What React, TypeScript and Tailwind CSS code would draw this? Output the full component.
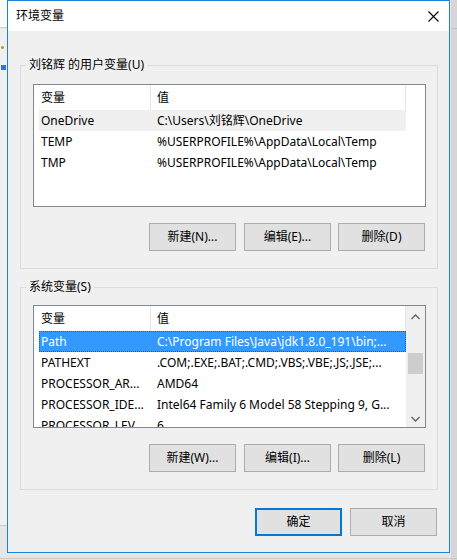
import React from 'react';

type Item = { name: string; value: string };

const USER_VARS: Item[] = [
  { name: 'OneDrive', value: 'C:\\Users\\刘铭辉\\OneDrive' },
  { name: 'TEMP', value: '%USERPROFILE%\\AppData\\Local\\Temp' },
  { name: 'TMP', value: '%USERPROFILE%\\AppData\\Local\\Temp' },
];

const SYS_VARS: Item[] = [
  { name: 'Path', value: 'C:\\Program Files\\Java\\jdk1.8.0_191\\bin;...' },
  { name: 'PATHEXT', value: '.COM;.EXE;.BAT;.CMD;.VBS;.VBE;.JS;.JSE;...' },
  { name: 'PROCESSOR_AR...', value: 'AMD64' },
  { name: 'PROCESSOR_IDE...', value: 'Intel64 Family 6 Model 58 Stepping 9, G...' },
  { name: 'PROCESSOR_LEV...', value: '6' },
];

const Button: React.FC<{ label: string; primary?: boolean }> = ({ label, primary }) => (
  <button
    className={`w-[87px] h-[28px] bg-[#e1e1e1] text-[12px] text-black flex items-center justify-center ${
      primary ? 'border-2 border-[#0078d7]' : 'border border-[#adadad]'
    }`}
  >
    {label}
  </button>
);

const Chevron: React.FC<{ down?: boolean }> = ({ down }) => (
  <svg width="9" height="6" viewBox="0 0 9 6" className={down ? 'rotate-180' : ''}>
    <path d="M0.5 5 L4.5 1 L8.5 5" fill="none" stroke="#606060" strokeWidth="1.3" />
  </svg>
);

const VarList: React.FC<{ items: Item[]; selected: number; focused?: boolean; scroll?: boolean }> = ({
  items,
  selected,
  focused,
  scroll,
}) => (
  <div className="w-[393px] h-[123px] border border-[#828790] bg-white flex">
    <div className="w-[372px] pl-[5px] overflow-hidden">
      {/* column header */}
      <div className="flex h-[25px] items-center">
        <div className="w-[112px] h-full pl-[2px] flex items-center border-r border-[#e5e5e5]">变量</div>
        <div className="w-[255px] h-full pl-[6px] flex items-center border-r border-[#e5e5e5]">值</div>
      </div>
      {items.map((it, i) => {
        const sel = i === selected;
        return (
          <div
            key={it.name}
            className={`flex h-[21px] w-[367px] items-center ${
              sel
                ? focused
                  ? 'bg-[#3399ff] text-white outline outline-1 outline-dotted outline-[#7a4a20] -outline-offset-1'
                  : 'bg-[#f0f0f0]'
                : ''
            }`}
          >
            <div className="w-[112px] pl-[2px] whitespace-nowrap overflow-hidden">{it.name}</div>
            <div className="w-[255px] pl-[6px] whitespace-nowrap overflow-hidden">{it.value}</div>
          </div>
        );
      })}
    </div>
    {scroll ? (
      <div className="w-[19px] bg-[#f0f0f0] flex flex-col">
        <div className="h-[21px] flex items-center justify-center">
          <Chevron />
        </div>
        <div className="flex-1">
          <div className="mt-[26px] mx-[2px] h-[21px] bg-[#cdcdcd]" />
        </div>
        <div className="h-[17px] flex items-center justify-center">
          <Chevron down />
        </div>
      </div>
    ) : (
      <div className="w-[19px]" />
    )}
  </div>
);

const Group: React.FC<{ title: string; children: React.ReactNode; className?: string }> = ({
  title,
  children,
  className,
}) => (
  <fieldset className={`w-[418px] ml-[12px] border border-[#dcdcdc] ${className ?? ''}`}>
    <legend className="ml-[5px] px-[3px] leading-[16px] text-[12px]">{title}</legend>
    {children}
  </fieldset>
);

export default function App() {
  return (
    <div className='relative w-[457px] h-[560px] overflow-hidden bg-[#e6e6e6] text-[12px] text-black font-["Noto_Sans","Noto_Sans_CJK_SC",sans-serif]'>
      {/* parent window behind the dialog */}
      <div className="absolute left-0 top-0 w-[7px] h-[28px] bg-[#fafafa] border-b border-[#cfcfcf]" />
      <div className="absolute left-0 top-[29px] w-[7px] h-[496px] bg-[#f0f0f0]" />
      <div className="absolute left-[1px] top-[46px] w-[3px] h-[3px] rounded-full bg-[#d08a2c]" />
      <div className="absolute left-[1px] top-[65px] w-[5px] h-[5px] bg-[#3b6fd0]" />
      <div className="absolute left-0 top-[525px] w-[7px] h-[1px] bg-[#c8c8c8]" />
      <div className="absolute right-0 top-0 w-[6px] h-[560px] bg-[#d6d6d6]" />
      <div className="absolute right-0 top-[28px] w-[6px] h-[1px] bg-[#c0c0c0]" />
      <div className="absolute left-0 top-[558px] w-[457px] h-[1px] bg-[#c8c8c8]" />

      {/* dialog */}
      <div className="relative ml-[7px] w-[443px] h-[553px] border border-[#1883d7] bg-[#f0f0f0] flex flex-col">
        <div className="h-[30px] bg-white flex items-center justify-between pl-[8px] pr-[10px]">
          <span className="text-[12px]">环境变量</span>
          <svg width="11" height="11" viewBox="0 0 11 11">
            <path d="M0.5 0.5 L10.5 10.5 M10.5 0.5 L0.5 10.5" stroke="#000" strokeWidth="1.1" />
          </svg>
        </div>

        <div className="pt-[26px]">
          <Group title="刘铭辉 的用户变量(U)">
            <div className="pt-[11px] pl-[12px] pb-[17px]">
              <VarList items={USER_VARS} selected={0} />
              <div className="flex justify-end gap-[7px] mt-[16px] mr-[12px]">
                <div className="mr-[1px]">
                  <Button label="新建(N)..." />
                </div>
                <Button label="编辑(E)..." />
                <Button label="删除(D)" />
              </div>
            </div>
          </Group>

          <Group title="系统变量(S)" className="mt-[10px]">
            <div className="pt-[10px] pl-[12px] pb-[17px]">
              <VarList items={SYS_VARS} selected={0} focused scroll />
              <div className="flex justify-end gap-[7px] mt-[16px] mr-[12px]">
                <div className="mr-[1px]">
                  <Button label="新建(W)..." />
                </div>
                <Button label="编辑(I)..." />
                <Button label="删除(L)" />
              </div>
            </div>
          </Group>

          <div className="flex justify-end gap-[8px] mt-[18px] pr-[12px]">
            <Button label="确定" primary />
            <Button label="取消" />
          </div>
        </div>
      </div>
    </div>
  );
}
